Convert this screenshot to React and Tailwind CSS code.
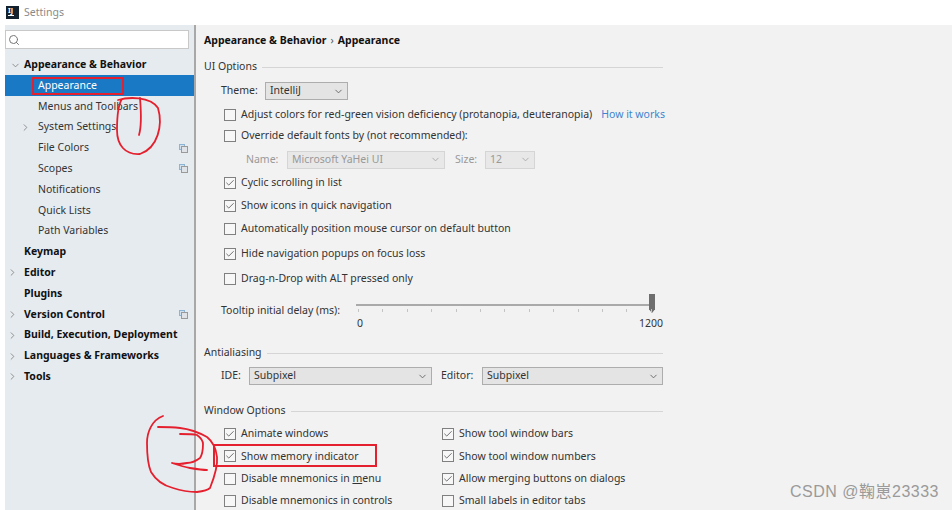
import React from 'react';
import { ChevronDown, ChevronRight, Search, Check } from 'lucide-react';

const tree = [
  { label: 'Appearance & Behavior', level: 0, open: true },
  { label: 'Appearance', level: 1, selected: true },
  { label: 'Menus and Toolbars', level: 1 },
  { label: 'System Settings', level: 1, arrow: true },
  { label: 'File Colors', level: 1, copy: true },
  { label: 'Scopes', level: 1, copy: true },
  { label: 'Notifications', level: 1 },
  { label: 'Quick Lists', level: 1 },
  { label: 'Path Variables', level: 1 },
  { label: 'Keymap', level: 0 },
  { label: 'Editor', level: 0, arrow: true },
  { label: 'Plugins', level: 0 },
  { label: 'Version Control', level: 0, arrow: true, copy: true },
  { label: 'Build, Execution, Deployment', level: 0, arrow: true },
  { label: 'Languages & Frameworks', level: 0, arrow: true },
  { label: 'Tools', level: 0, arrow: true },
];

const CopyIcon = () => (
  <svg width="9" height="9" viewBox="0 0 9 9" className="absolute left-[174px] top-[6px]">
    <rect x="0.5" y="0.5" width="5" height="5" fill="#cfe0ee" stroke="#8db4d4" />
    <rect x="2.5" y="2.5" width="6" height="6" fill="#dfe3e7" stroke="#9a9a9a" />
  </svg>
);

const TreeRow = ({ item }) => {
  const indent = item.level === 0 ? 'pl-[19px]' : 'pl-[33px]';
  return (
    <div className={`relative flex h-[20.8px] items-center ${indent} ${item.selected ? 'bg-[#1a79c4] text-white' : item.level === 0 ? 'text-[#111] font-bold' : 'text-[#333]'}`}>
      {item.open && <ChevronDown className="absolute left-[5px] top-[5px] h-[11px] w-[11px] text-[#888]" />}
      {item.arrow && <ChevronRight className={`absolute top-[5px] h-[11px] w-[11px] text-[#888] ${item.level === 0 ? 'left-[2px]' : 'left-[15px]'}`} />}
      <span>{item.label}</span>
      {item.copy && <CopyIcon />}
    </div>
  );
};

const CheckBox = ({ checked, label, extra }) => (
  <div className="flex h-full items-center whitespace-nowrap">
    <div className="flex h-[12px] w-[12px] items-center justify-center border border-[#808080] bg-[#f7f7f7]">
      {checked && <Check className="h-[10px] w-[10px] text-[#555]" strokeWidth={2} />}
    </div>
    <span className="ml-[5px] text-[#333]">{label}</span>
    {extra}
  </div>
);

const GroupTitle = ({ title, className }) => (
  <div className={`flex w-[467px] items-center gap-[5px] pl-[8px] text-[#333] ${className}`}>
    <span>{title}</span>
    <div className="h-px flex-1 bg-[#d5d5d5]" />
  </div>
);

const Select = ({ value, className, disabled }) => (
  <div className={`flex h-[18px] items-center justify-between border pl-[4px] pr-[3px] ${disabled ? 'border-[#d5d5d5] bg-[#e8e8e8] text-[#999]' : 'border-[#adadad] bg-[#e4e4e4] text-[#333]'} ${className}`}>
    <span>{value}</span>
    <ChevronDown className={`h-[11px] w-[11px] ${disabled ? 'text-[#aaa]' : 'text-[#666]'}`} />
  </div>
);

const Row = ({ h, className = 'pl-[25px]', children }) => (
  <div className={`flex items-center ${h} ${className}`}>{children}</div>
);

const Slider = () => (
  <div className="relative h-[39px] w-[307px]">
    <div className="absolute left-0 right-[8px] top-[10px] h-[2px] bg-[#aaa]" />
    <div className="absolute right-[8px] top-0 h-[19px] w-[6px] bg-[#6e6e6e] [clip-path:polygon(0_0,100%_0,100%_80%,50%_100%,0_80%)]" />
    <div className="absolute left-[2px] right-[11px] top-[15px] flex justify-between">
      {Array.from({ length: 13 }).map((_, i) => (
        <div key={i} className="h-[3px] w-px bg-[#c4c4c4]" />
      ))}
    </div>
    <span className="absolute left-[1px] top-[22px] text-[#333]">0</span>
    <span className="absolute right-0 top-[22px] text-[#333]">1200</span>
  </div>
);

export default function App() {
  return (
    <div className="relative h-[510px] w-[952px] overflow-hidden bg-white text-[10.5px] [font-family:'Noto_Sans','Noto_Sans_CJK_SC',sans-serif]">
      {/* 标题栏 */}
      <div className="flex h-[25px] items-center pl-[6px]">
        <div className="flex h-[13px] w-[13px] flex-col bg-[#13202e] px-[2px] pt-[1px] text-[7px] font-bold leading-[7px] text-white">
          <span>IJ</span>
          <div className="mt-[1px] h-px w-[6px] bg-white" />
        </div>
        <span className="ml-[5px] text-[#8a8a8a]">Settings</span>
      </div>

      <div className="flex h-[485px] pl-[5px]">
        {/* 左侧树 */}
        <div className="w-[191px] shrink-0 border-r-2 border-[#a8a8a8] bg-[#e6ebf0]">
          <div className="pr-[5px] pt-[5px]">
            <div className="flex h-[19px] items-center border border-[#c8c8c8] bg-white pl-[2px]">
              <Search className="h-[12px] w-[12px] text-[#777]" />
            </div>
          </div>
          <div className="mt-[5.5px]">
            {tree.map(item => (
              <TreeRow key={item.label} item={item} />
            ))}
          </div>
        </div>

        {/* 右侧内容 */}
        <div className="flex-1 bg-[#f2f2f2]">
          <div className="flex h-[30px] items-center pl-[8px] pt-[1px] font-bold text-[#111]">
            Appearance &amp; Behavior <span className="mx-[4px] font-normal text-[#555]">›</span> Appearance
          </div>
          <GroupTitle title="UI Options" className="mt-[2px] h-[20px]" />

          <Row h="h-[28px]">
            <span className="w-[44px] text-[#333]">Theme:</span>
            <Select value="IntelliJ" className="w-[83px]" />
          </Row>
          <Row h="h-[20px]" className="pl-[28px]">
            <CheckBox
              label="Adjust colors for red-green vision deficiency (protanopia, deuteranopia)"
              extra={<span className="ml-[9px] text-[#3d85d1]">How it works</span>}
            />
          </Row>
          <Row h="h-[22px]" className="pl-[28px]">
            <CheckBox label="Override default fonts by (not recommended):" />
          </Row>
          <Row h="h-[25px]" className="pl-[50px] text-[#999]">
            <span className="w-[41px]">Name:</span>
            <Select value="Microsoft YaHei UI" disabled className="w-[158px]" />
            <span className="ml-[10px] w-[30px]">Size:</span>
            <Select value="12" disabled className="w-[50px]" />
          </Row>
          <Row h="h-[22px]" className="pl-[28px]"><CheckBox checked label="Cyclic scrolling in list" /></Row>
          <Row h="h-[23px]" className="pl-[28px]"><CheckBox checked label="Show icons in quick navigation" /></Row>
          <Row h="h-[24px]" className="pl-[28px]"><CheckBox label="Automatically position mouse cursor on default button" /></Row>
          <Row h="h-[25px]" className="pl-[28px]"><CheckBox checked label="Hide navigation popups on focus loss" /></Row>
          <Row h="h-[25px]" className="pl-[28px]"><CheckBox label="Drag-n-Drop with ALT pressed only" /></Row>

          <div className="mt-[3px] flex pl-[25px]">
            <span className="mt-[9px] w-[135px] text-[#333]">Tooltip initial delay (ms):</span>
            <Slider />
          </div>

          <GroupTitle title="Antialiasing" className="mt-[10px] h-[20px]" />
          <Row h="h-[26px]" className="pl-[25px]">
            <span className="w-[28px] text-[#333]">IDE:</span>
            <Select value="Subpixel" className="w-[183px]" />
            <span className="ml-[9px] w-[41px] text-[#333]">Editor:</span>
            <Select value="Subpixel" className="w-[181px]" />
          </Row>

          <GroupTitle title="Window Options" className="mt-[12px] h-[20px]" />
          <div className="mt-[2px] grid w-[500px] grid-cols-[218px_1fr] auto-rows-[22.3px] pl-[28px]">
            <CheckBox checked label="Animate windows" />
            <CheckBox checked label="Show tool window bars" />
            <CheckBox checked label="Show memory indicator" />
            <CheckBox checked label="Show tool window numbers" />
            <CheckBox label={<>Disable mnemonics in <u>m</u>enu</>} />
            <CheckBox checked label="Allow merging buttons on dialogs" />
            <CheckBox label="Disable mnemonics in controls" />
            <CheckBox label="Small labels in editor tabs" />
          </div>
        </div>
      </div>

      {/* 红色标注 */}
      <div className="absolute left-[32px] top-[77px] h-[18px] w-[92px] border-2 border-[#e5202e]" />
      <div className="absolute left-[213px] top-[444px] h-[23px] w-[164px] border-2 border-[#e5202e]" />
      <svg className="absolute left-0 top-0" width="952" height="510" fill="none" stroke="#e5202e" strokeWidth="1.8" strokeLinecap="round" strokeLinejoin="round">
        <path d="M118 100C128 97 150 96 158 108C163 125 158 148 140 154C125 155 117 145 117 130C117 118 118 105 122 99" />
        <path d="M140 98C141 110 142 125 139 135" />
        <path d="M163 416C152 420 147 432 147 443C147 455 148 465 151 472C157 482 165 486 173 488C182 491 190 492 197 492C205 491 208 490 210 488C214 478 218 467 217 457C216 448 212 441 207 437C198 432 189 429 180 428C172 427 164 427 158 427" />
        <path d="M180 434C187 434 193 434 197 435C201 438 203 441 203 444C203 450 202 455 200 458C196 461 192 463 187 463C182 464 176 464 172 463C178 465 184 467 190 468C196 469 202 470 207 470" />
      </svg>

      <div className="absolute left-[790px] top-[482px] text-[16px] leading-[20px] tracking-[0.5px] text-[#9a9a9a] [font-family:'Liberation_Sans','Noto_Sans_CJK_SC',sans-serif]">CSDN @鞠崽23333</div>
    </div>
  );
}
